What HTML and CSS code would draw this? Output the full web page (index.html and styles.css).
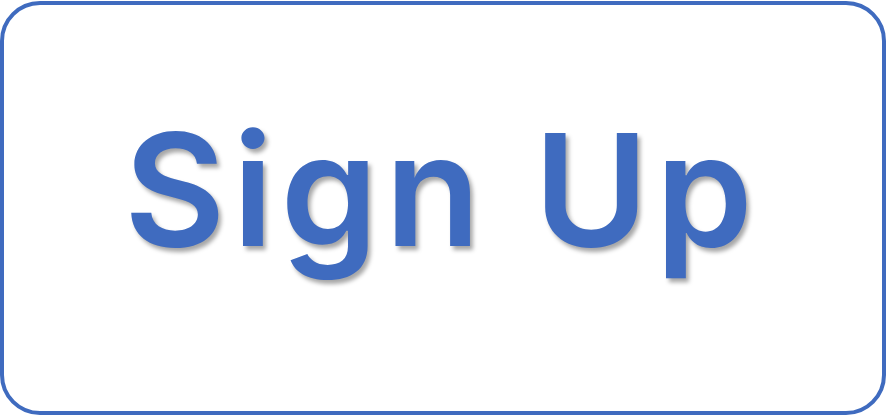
FILE: index.html
```html
<!DOCTYPE html>
<html>
<head>
<meta charset="utf-8">
<link rel="stylesheet" href="styles.css">
</head>
<body>
<div class="button">
  <span class="label">Sign Up</span>
</div>
</body>
</html>
```
FILE: styles.css
```css
html, body {
  margin: 0;
  padding: 0;
  background: #ffffff;
}
body {
  width: 887px;
  height: 416px;
  overflow: hidden;
}
.button {
  box-sizing: border-box;
  margin: 1px 0 0 0;
  width: 886px;
  height: 414px;
  border: 4px solid #3f6bbf;
  border-radius: 40px;
  display: flex;
  align-items: center;
  justify-content: center;
  padding-bottom: 36px;
  padding-right: 2px;
}
.label {
  font-family: "Inter", "DejaVu Sans", sans-serif;
  font-weight: 600;
  font-size: 156px;
  line-height: 1;
  letter-spacing: 7px;
  color: #3f6bbf;
  text-shadow: 3px 4px 4px rgba(0, 0, 0, 0.35);
  white-space: nowrap;
}
```
